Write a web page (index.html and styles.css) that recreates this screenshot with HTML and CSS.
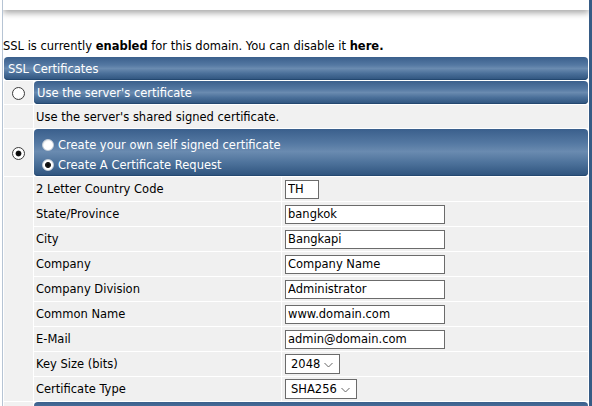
FILE: index.html
```html
<!DOCTYPE html>
<html lang="en">
<head>
    <meta charset="UTF-8">
    <title>SSL Certificates</title>
    <link rel="stylesheet" href="styles.css">
</head>
<body>
    <div class="frame">
        <div class="topbar"></div>

        <p class="status">SSL is currently <b>enabled</b> for this domain. You can disable it <b>here.</b></p>

        <table class="ssl">
            <tr>
                <td colspan="3" class="bar head">SSL Certificates</td>
            </tr>
            <tr>
                <td class="pick"><input type="radio" name="type" class="radio"></td>
                <td colspan="2" class="bar">Use the server's certificate</td>
            </tr>
            <tr>
                <td class="pick"></td>
                <td colspan="2" class="note">Use the server's shared signed certificate.</td>
            </tr>
            <tr>
                <td class="pick"><input type="radio" name="type" class="radio" checked></td>
                <td colspan="2" class="bar tall">
                    <label class="option"><input type="radio" name="request" class="radio light">Create your own self signed certificate</label>
                    <label class="option"><input type="radio" name="request" class="radio light" checked>Create A Certificate Request</label>
                </td>
            </tr>
            <tr>
                <td class="pick" rowspan="9"></td>
                <td class="label">2 Letter Country Code</td>
                <td class="field"><input type="text" class="text short" value="TH"></td>
            </tr>
            <tr>
                <td class="label">State/Province</td>
                <td class="field"><input type="text" class="text" value="bangkok"></td>
            </tr>
            <tr>
                <td class="label">City</td>
                <td class="field"><input type="text" class="text" value="Bangkapi"></td>
            </tr>
            <tr>
                <td class="label">Company</td>
                <td class="field"><input type="text" class="text" value="Company Name"></td>
            </tr>
            <tr>
                <td class="label">Company Division</td>
                <td class="field"><input type="text" class="text" value="Administrator"></td>
            </tr>
            <tr>
                <td class="label">Common Name</td>
                <td class="field"><input type="text" class="text" value="www.domain.com"></td>
            </tr>
            <tr>
                <td class="label">E-Mail</td>
                <td class="field"><input type="text" class="text" value="admin@domain.com"></td>
            </tr>
            <tr>
                <td class="label">Key Size (bits)</td>
                <td class="field">
                    <span class="choice">
                        <select class="dropdown keysize">
                            <option>2048</option>
                            <option>4096</option>
                        </select>
                        <svg class="chevron" width="9" height="6" viewBox="0 0 9 6"><path d="M0.5 1 L4.5 5 L8.5 1" fill="none" stroke="#666" stroke-width="1"/></svg>
                    </span>
                </td>
            </tr>
            <tr>
                <td class="label">Certificate Type</td>
                <td class="field">
                    <span class="choice">
                        <select class="dropdown certtype">
                            <option>SHA256</option>
                            <option>SHA1</option>
                        </select>
                        <svg class="chevron" width="9" height="6" viewBox="0 0 9 6"><path d="M0.5 1 L4.5 5 L8.5 1" fill="none" stroke="#666" stroke-width="1"/></svg>
                    </span>
                </td>
            </tr>
            <tr>
                <td class="pick"></td>
                <td colspan="2" class="bar"></td>
            </tr>
        </table>
    </div>
</body>
</html>
```

FILE: styles.css
```css
body {
    margin: 0;
    font-family: "DejaVu Sans", Verdana, sans-serif;
    font-size: 11.5px;
    color: #000;
    background-color: #fff;
}

.frame {
    margin-left: 2px;
    border-left: 1px solid #b6c4d4;
    border-right: 3px solid #365b85;
    min-height: 406px;
    overflow: hidden;
}

.topbar {
    height: 10px;
    background-color: #fff;
    box-shadow: 0 3px 6px rgba(0, 0, 0, 0.35);
}

.status {
    margin: 29px 0 3px 0;
    line-height: 14px;
}

.ssl {
    width: 100%;
    border-collapse: separate;
    border-spacing: 1px;
}

.ssl td {
    padding: 0;
    vertical-align: middle;
}

.bar {
    height: 23px;
    padding-left: 3px !important;
    color: #fff;
    border-radius: 4px;
    background: linear-gradient(to bottom, #3a5f8c 0%, #5478a2 35%, #6a8bb0 50%, #4a6f99 72%, #2e537d 100%);
    box-shadow: inset 0 -1px 0 #244870;
}

.head {
    padding-left: 4px !important;
}

.tall {
    height: 42px;
    padding: 5px 0 0 8px !important;
    background: linear-gradient(to bottom, #3a5f8c 0%, #5478a2 30%, #6a8bb0 48%, #4d729b 72%, #2e537d 100%);
}

.pick {
    width: 29px;
    text-align: center;
    background-color: #f1f1f1;
}

.note {
    height: 23px;
    padding-left: 2px !important;
    background-color: #f1f1f1;
}

.label {
    width: 245px;
    height: 24px;
    padding-left: 2px !important;
    background-color: #f0f0f0;
}

.field {
    height: 24px;
    padding-left: 3px !important;
    background-color: #f0f0f0;
}

.option {
    display: flex;
    align-items: center;
    height: 20px;
}

.radio {
    appearance: none;
    width: 13px;
    height: 13px;
    margin: 0;
    border: 1px solid #3c3c3c;
    border-radius: 50%;
    background: radial-gradient(circle at 40% 35%, #fff 55%, #e2e2e2 100%);
    vertical-align: middle;
}

.radio:checked {
    background: radial-gradient(circle, #000 0, #111 2.5px, #fff 3.3px);
}

.radio.light {
    width: 12px;
    height: 12px;
    margin-right: 4px;
    border-color: #c7d0da;
    background: radial-gradient(circle at 60% 65%, #fff 55%, #d6d6d6 100%);
}

.radio.light:checked {
    background: radial-gradient(circle, #000 0, #222 2.6px, #fff 3.4px);
}

.text {
    box-sizing: border-box;
    width: 160px;
    height: 19px;
    padding: 0 2px;
    border: 1px solid #6b6b6b;
    font-family: "DejaVu Sans", Verdana, sans-serif;
    font-size: 11.5px;
    color: #000;
    background-color: #fff;
    vertical-align: middle;
}

.text.short {
    width: 34px;
}

.choice {
    position: relative;
    display: inline-block;
    vertical-align: middle;
}

.dropdown {
    appearance: none;
    box-sizing: border-box;
    height: 20px;
    padding: 0 0 0 5px;
    border: 1px solid #6b6b6b;
    border-radius: 0;
    font-family: "DejaVu Sans", Verdana, sans-serif;
    font-size: 11.5px;
    color: #000;
    background-color: #fff;
    display: block;
}

.keysize {
    width: 55px;
}

.certtype {
    width: 72px;
}

.chevron {
    position: absolute;
    right: 7px;
    top: 8px;
    pointer-events: none;
}
```
